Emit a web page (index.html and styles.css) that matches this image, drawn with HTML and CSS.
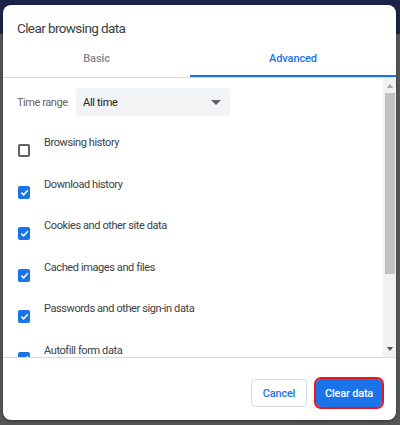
FILE: index.html
```html
<!DOCTYPE html>
<html>
<head>
<meta charset="utf-8">
<link rel="stylesheet" href="styles.css">
</head>
<body>
<div class="dialog">
  <div class="title">Clear browsing data</div>
  <div class="tabs">
    <div class="tab">Basic</div>
    <div class="tab active">Advanced</div>
  </div>
  <div class="body">
    <div class="scroll">
      <div class="range">
        <span class="range-label">Time range</span>
        <div class="select">
          <span>All time</span>
          <span class="caret"></span>
        </div>
      </div>
      <div class="row"><span class="cb"></span><span class="label">Browsing history</span></div>
      <div class="row"><span class="cb on"><svg viewBox="0 0 12 12"><path d="M2.6 6.2 L5 8.5 L9.6 3.6" /></svg></span><span class="label">Download history</span></div>
      <div class="row"><span class="cb on"><svg viewBox="0 0 12 12"><path d="M2.6 6.2 L5 8.5 L9.6 3.6" /></svg></span><span class="label">Cookies and other site data</span></div>
      <div class="row"><span class="cb on"><svg viewBox="0 0 12 12"><path d="M2.6 6.2 L5 8.5 L9.6 3.6" /></svg></span><span class="label">Cached images and files</span></div>
      <div class="row"><span class="cb on"><svg viewBox="0 0 12 12"><path d="M2.6 6.2 L5 8.5 L9.6 3.6" /></svg></span><span class="label">Passwords and other sign-in data</span></div>
      <div class="row"><span class="cb on"><svg viewBox="0 0 12 12"><path d="M2.6 6.2 L5 8.5 L9.6 3.6" /></svg></span><span class="label">Autofill form data</span></div>
    </div>
    <div class="scrollbar">
      <span class="arrow up"></span>
      <div class="thumb-track"><div class="thumb"></div></div>
      <span class="arrow down"></span>
    </div>
  </div>
  <div class="footer">
    <button class="btn cancel">Cancel</button>
    <button class="btn primary">Clear data</button>
  </div>
</div>
</body>
</html>
```

FILE: styles.css
```css
html, body {
  margin: 0;
  padding: 0;
}
body {
  width: 400px;
  height: 425px;
  overflow: hidden;
  background: linear-gradient(to bottom, #1a2349 0, #1a2349 34px, #555555 34px, #555555 100%);
  font-family: Roboto, "Liberation Sans", sans-serif;
  padding: 5px 4px 0 3px;
  box-sizing: border-box;
}
.dialog {
  width: 393px;
  height: 415px;
  background: #fff;
  border-radius: 8px;
  display: flex;
  flex-direction: column;
  overflow: hidden;
  box-shadow: 0 1px 3px rgba(0,0,0,0.4);
}
.title {
  height: 38px;
  padding: 0 0 0 14px;
  font-size: 13.5px;
  line-height: 47px;
  color: #3c4043;
  letter-spacing: -0.6px;
}
.tabs {
  display: flex;
  height: 34px;
  border-bottom: 1px solid #dadce0;
}
.tab {
  flex: 0 0 187px;
  text-align: center;
  font-size: 11px;
  font-weight: 500;
  color: #80868b;
  line-height: 32px;
  box-sizing: border-box;
  letter-spacing: -0.1px;
}
.tab.active {
  flex: 1 1 auto;
  color: #1a73e8;
  border-bottom: 2px solid #1a73e8;
}
.body {
  height: 279px;
  display: flex;
  border-bottom: 1px solid #dadce0;
}
.scroll {
  flex: 1 1 auto;
  overflow: hidden;
  padding: 10px 0 0 14px;
}
.range {
  display: flex;
  align-items: center;
  height: 28px;
}
.range-label {
  width: 59px;
  font-size: 11px;
  color: #5f6368;
  letter-spacing: -0.45px;
}
.select {
  width: 154px;
  height: 28px;
  box-sizing: border-box;
  background: #f1f3f4;
  border-radius: 4px;
  display: flex;
  align-items: center;
  justify-content: space-between;
  padding: 0 9px 0 7px;
  font-size: 11px;
  color: #202124;
  letter-spacing: -0.3px;
}
.caret {
  width: 0;
  height: 0;
  border-left: 5px solid transparent;
  border-right: 5px solid transparent;
  border-top: 5px solid #5f6368;
}
.row {
  display: flex;
  align-items: flex-start;
  height: 41.6px;
}
.range + .row {
  margin-top: 19px;
}
.cb {
  width: 12px;
  height: 13px;
  box-sizing: border-box;
  border: 2px solid #5f6368;
  border-radius: 2px;
  margin: 9px 0 0 1px;
  flex: 0 0 auto;
  display: flex;
  align-items: center;
  justify-content: center;
}
.cb.on {
  background: #1a73e8;
  border-color: #1a73e8;
  border-width: 0;
}
.cb svg {
  width: 11px;
  height: 11px;
  fill: none;
  stroke: #fff;
  stroke-width: 1.7;
}
.label {
  margin-left: 14px;
  font-size: 11px;
  line-height: 14px;
  color: #3c4043;
  letter-spacing: -0.4px;
  margin-top: 1px;
}
.scrollbar {
  flex: 0 0 13px;
  background: #f1f1f1;
  display: flex;
  flex-direction: column;
  align-items: center;
}
.arrow {
  width: 0;
  height: 0;
  border-left: 3.5px solid transparent;
  border-right: 3.5px solid transparent;
}
.arrow.up {
  margin-top: 6px;
  border-bottom: 4px solid #a3a3a3;
}
.arrow.down {
  margin-bottom: 6px;
  border-top: 4px solid #505050;
}
.thumb-track {
  flex: 1 1 auto;
  width: 100%;
  padding-top: 5px;
}
.thumb {
  width: 10px;
  margin-left: 2px;
  height: 181px;
  background: #c1c1c1;
}
.footer {
  flex: 1 1 auto;
  display: flex;
  justify-content: flex-end;
  align-items: flex-start;
  gap: 9px;
  padding: 20px 14px 0 0;
}
.btn {
  font-family: Roboto, "Liberation Sans", sans-serif;
  font-size: 11px;
  font-weight: 500;
  border-radius: 4px;
  height: 28px;
  cursor: pointer;
  margin-top: 1px;
  letter-spacing: -0.2px;
  padding: 0;
}
.cancel {
  width: 56px;
  background: #fff;
  color: #1a73e8;
  border: 1px solid #dadce0;
}
.primary {
  width: 66px;
  background: #1a73e8;
  color: #fff;
  border: 0;
  margin-top: 1px;
  outline: 2px solid #e8141f;
  outline-offset: 0;
  border-radius: 5px;
}
```
